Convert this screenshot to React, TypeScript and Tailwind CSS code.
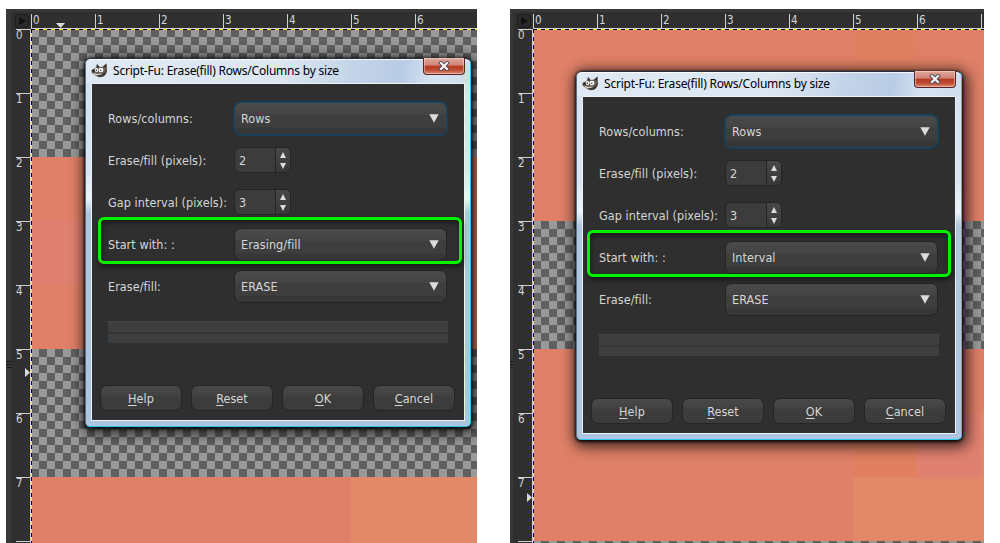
import clsx from 'clsx';

const UI_FONT = "font-['DejaVu_Sans_Condensed','DejaVu_Sans',sans-serif]";

type Band = { height: number; cells?: string[] };

const BASE = '#e08068';

function Wilber() {
  return (
    <svg width="17" height="16" viewBox="0 0 17 16">
      <path d="M4.5 5 L6 1 L8.5 4 L12 3.6 L15.5 0.5 L16 6 Q16.5 11 12.5 13.5 Q8 15.5 4.5 12.5 L1 10 Q-0.3 7.5 1.5 6.5 Z" fill="#6a6258" />
      <path d="M6 1 L8.5 4 L6 5 Z M15.5 .5 L15 5 L12 3.8 Z" fill="#3a3530" />
      <path d="M8 12 Q13 11.5 15.5 6 Q15.8 11 12.3 13.2 Q9 14.6 6 13.2 Z" fill="#3d3935" />
      <ellipse cx="5.6" cy="7" rx="1.8" ry="2.1" fill="#f4f4f0" />
      <ellipse cx="10" cy="7" rx="2.4" ry="2.3" fill="#fff" />
      <circle cx="5.4" cy="7.2" r="0.7" fill="#333" />
      <circle cx="9.8" cy="7.2" r="0.8" fill="#333" />
      <ellipse cx="2.3" cy="7.8" rx="1.5" ry="1.3" fill="#2a2a2a" />
      <path d="M3 10.5 Q6 12.5 10.5 10.8" stroke="#d8d4cc" strokeWidth="1.2" fill="none" />
    </svg>
  );
}

function CloseButton() {
  return (
    <div className="flex h-[17px] w-[42px] items-center justify-center rounded-b-[4px] border border-t-0 border-[#54242a] bg-[linear-gradient(#dfa89d_0%,#d28374_45%,#b93a22_50%,#bd4a30_75%,#dc8e72_100%)] shadow-[inset_0_0_0_1px_rgba(255,220,210,0.5)]">
      <svg width="12" height="10" viewBox="0 0 12 10">
        <path d="M3 2 L9 8 M9 2 L3 8" stroke="#4c4a58" strokeWidth="4" strokeLinecap="square" />
        <path d="M3 2 L9 8 M9 2 L3 8" stroke="#f4f4f4" strokeWidth="2.2" strokeLinecap="square" />
      </svg>
    </div>
  );
}

function Label({ children }: { children: string }) {
  return <div className="w-[126px] shrink-0 pt-[2px] whitespace-nowrap">{children}</div>;
}

function Combo({ value, focused = false }: { value: string; focused?: boolean }) {
  return (
    <div
      className={clsx(
        'flex h-[33px] w-[213px] items-center justify-between rounded-[7px] border bg-[linear-gradient(#4b4b4b_0%,#434343_38%,#3e3e3e_40%,#3e3e3e_78%,#373737_80%,#373737_100%)] pr-[7px] pl-[6px]',
        focused ? 'border-[#174463] shadow-[0_0_0_1px_#1b3c52]' : 'border-[#242424]'
      )}
    >
      <span className="pt-[3px]">{value}</span>
      <svg width="10" height="9" viewBox="0 0 10 9">
        <path d="M0.3 0.3 H9.7 L5 8.7 Z" fill="#dcdcdc" />
      </svg>
    </div>
  );
}

function Spin({ value }: { value: string }) {
  return (
    <div className="flex h-[26px] w-[57px] overflow-hidden rounded-[6px] border border-[#242424] bg-[#3c3c3c]">
      <div className="flex w-[40px] items-center pt-[2px] pl-[4px]">{value}</div>
      <div className="flex flex-1 flex-col items-center justify-center gap-[5px] border-l border-[#242424] bg-[linear-gradient(#484848,#383838)]">
        <svg width="6" height="6" viewBox="0 0 6 6">
          <path d="M3 0 L6 6 H0 Z" fill="#dcdcdc" />
        </svg>
        <svg width="6" height="6" viewBox="0 0 6 6">
          <path d="M0 0 H6 L3 6 Z" fill="#dcdcdc" />
        </svg>
      </div>
    </div>
  );
}

function DialogButton({ label }: { label: string }) {
  return (
    <div className="flex h-[26px] w-[82px] items-center justify-center rounded-[7px] border border-[#242424] bg-[linear-gradient(#494949_0%,#424242_38%,#3d3d3d_42%,#3b3b3b_100%)]">
      <span className="pt-[2px]">
        <span className="underline underline-offset-2">{label[0]}</span>
        {label.slice(1)}
      </span>
    </div>
  );
}

type DialogProps = { startWith: string; className: string; highlightClass: string };

function Dialog({ startWith, className, highlightClass }: DialogProps) {
  return (
    <div
      className={clsx(
        'absolute flex h-[369px] w-[386px] flex-col rounded-t-[6px] rounded-b-[5px] border border-t-[#26303a] border-r-[#27c8ee] border-b-[#27c8ee] border-l-[#5b7082] bg-[linear-gradient(#d4e0ee_0%,#d9e6f2_30%,#eef5fa_38%,#b0c6de_42%,#aec5e0_100%)] shadow-[0_1px_3px_1px_rgba(0,0,0,0.85),2px_3px_14px_4px_rgba(0,0,0,0.7)]',
        className
      )}
    >
      <div className="flex h-[24px] shrink-0 items-start justify-between rounded-t-[5px] border-t border-white/80 bg-[linear-gradient(100deg,#dfe9f3_0%,#dde7f1_50%,#c3d3e8_70%,#b9cce5_82%,#d6e3f1_90%,#cfdcec_100%)] pr-[5px] pl-[5px]">
        <div className="flex items-center gap-[5px] pt-[2px] font-['Noto_Sans','Open_Sans',sans-serif] text-[12px] leading-[17px] tracking-[-0.21px] whitespace-nowrap text-black">
          <Wilber />
          <span>Script-Fu: Erase(fill) Rows/Columns by size</span>
        </div>
        <div className="-mt-[2px]">
          <CloseButton />
        </div>
      </div>
      <div className={clsx('relative mx-[5px] mb-[5px] flex flex-1 flex-col border border-[#eaf2fa] bg-[#2f2f2f] pt-[13px] text-[12.5px] tracking-[0.06px] text-[#d6d6d6]', UI_FONT)}>
        <div className="flex flex-col pl-[16px]">
          <div className="flex h-[42px] items-center">
            <Label>Rows/columns:</Label>
            <Combo value="Rows" focused />
          </div>
          <div className="flex h-[42px] items-center">
            <Label>Erase/fill (pixels):</Label>
            <Spin value="2" />
          </div>
          <div className="flex h-[42px] items-center">
            <Label>Gap interval (pixels):</Label>
            <Spin value="3" />
          </div>
          <div className="flex h-[42px] items-center">
            <Label>Start with: :</Label>
            <Combo value={startWith} />
          </div>
          <div className="flex h-[42px] items-center">
            <Label>Erase/fill:</Label>
            <Combo value="ERASE" />
          </div>
          <div className="mt-[14px] -ml-px h-[23px] w-[342px] border border-[#27323a] border-t-[#3f4848] bg-[linear-gradient(#3e3e3e_0_10px,#353535_10px_12px,#3e3e3e_12px)]" />
        </div>
        <div className="mt-auto mb-[9px] flex gap-[9px] pl-[8px]">
          <DialogButton label="Help" />
          <DialogButton label="Reset" />
          <DialogButton label="OK" />
          <DialogButton label="Cancel" />
        </div>
        {/* highlight around the changed option */}
        <div
          className={clsx(
            'absolute h-[47px] rounded-[6px] border-[3px] border-[#00f400] shadow-[1px_3px_5px_rgba(0,0,0,0.5),inset_1px_3px_5px_rgba(0,0,0,0.45)]',
            highlightClass
          )}
        />
      </div>
    </div>
  );
}

function Corner() {
  return (
    <div className="flex w-[20px] shrink-0 items-center justify-center pl-[2px]">
      <div className="flex h-[14px] w-[14px] items-center justify-center rounded-[3px] border border-[#1d1d1d] bg-[#2a2a2a]">
        <svg width="7" height="8" viewBox="0 0 7 8">
          <path d="M0 0 L7 4 L0 8 Z" fill="#111" />
        </svg>
      </div>
    </div>
  );
}

function TopRuler({ marker }: { marker?: boolean }) {
  return (
    <div className="relative flex min-w-0 flex-1 items-end overflow-hidden border-b border-[#d0d0d0]">
      {Array.from({ length: 8 }).map((_, i) => (
        <div key={i} className="h-[14px] w-16 shrink-0 border-l border-[#d0d0d0] pl-px leading-[12px]">
          {i < 7 ? i : ''}
        </div>
      ))}
      {marker && (
        <svg className="absolute bottom-0 left-[25px]" width="9" height="5" viewBox="0 0 9 5">
          <path d="M0 0 H9 L4.5 5 Z" fill="#dadada" />
        </svg>
      )}
    </div>
  );
}

function SideRuler({ markerClass }: { markerClass: string }) {
  return (
    <div className="relative flex w-[20px] shrink-0 flex-col border-r border-[#d0d0d0] pl-[5px]">
      {Array.from({ length: 9 }).map((_, i) => (
        <div key={i} className="h-16 shrink-0 border-t border-[#d0d0d0] leading-[10px]">
          {i < 8 ? i : ''}
        </div>
      ))}
      <svg className={clsx('absolute right-0', markerClass)} width="5" height="9" viewBox="0 0 5 9">
        <path d="M0 0 L5 4.5 L0 9 Z" fill="#dadada" />
      </svg>
    </div>
  );
}

function Canvas({ bands }: { bands: Band[] }) {
  return (
    <div className="relative min-w-0 flex-1 overflow-hidden bg-[conic-gradient(#606060_25%,#999_0_50%,#606060_0_75%,#999_0)] bg-[length:16px_16px]">
      {bands.map((band, i) => (
        <div key={i} className="flex" style={{ height: band.height }}>
          {band.cells?.map((color, j) => (
            <div key={j} className="w-16 shrink-0" style={{ backgroundColor: color }} />
          ))}
        </div>
      ))}
      {/* layer boundary */}
      <div className="absolute inset-x-0 top-0 h-px bg-[repeating-linear-gradient(90deg,#000_0_4px,#ffee00_4px_8px)]" />
      <div className="absolute inset-y-0 left-0 w-px bg-[repeating-linear-gradient(#000_0_4px,#ffee00_4px_8px)]" />
    </div>
  );
}

type ImageWindowProps = {
  className: string;
  gutter: string;
  bands: Band[];
  markerClass: string;
  topMarker?: boolean;
  startWith: string;
  dialogClass: string;
  highlightClass: string;
};

function ImageWindow({
  className,
  gutter,
  bands,
  markerClass,
  topMarker,
  startWith,
  dialogClass,
  highlightClass,
}: ImageWindowProps) {
  return (
    <div className={clsx('relative flex h-[534px] overflow-hidden bg-[#2f2f2f]', className)}>
      <div className={clsx('flex shrink-0 items-center bg-[#383838] pt-[178px]', gutter)}>
        <div className="h-[9px] w-full bg-[repeating-linear-gradient(#181818_0_1px,#383838_1px_3px)]" />
      </div>
      <div className={clsx('flex min-w-0 flex-1 flex-col text-[11.5px] text-[#d6d6d6]', UI_FONT)}>
        <div className="h-[3px] shrink-0 bg-[#383838]" />
        <div className="flex h-[17px] shrink-0">
          <Corner />
          <TopRuler marker={topMarker} />
        </div>
        <div className="flex min-h-0 flex-1">
          <SideRuler markerClass={markerClass} />
          <Canvas bands={bands} />
        </div>
      </div>
      <Dialog startWith={startWith} className={dialogClass} highlightClass={highlightClass} />
    </div>
  );
}

const row = (...cells: string[]): Band => ({ height: 64, cells });

const leftBands: Band[] = [
  { height: 128 },
  row(BASE, '#e17b68', BASE, BASE, BASE, BASE, BASE),
  row('#e08070', '#e08070', BASE, BASE, BASE, BASE, BASE),
  row(BASE, BASE, BASE, BASE, BASE, BASE, BASE),
  { height: 128 },
  row(BASE, BASE, BASE, BASE, BASE, '#e08868', '#e08868'),
  row(BASE, BASE, BASE, BASE, BASE, '#e08868', '#e08868'),
];

const rightBands: Band[] = [
  row(BASE, BASE, BASE, BASE, BASE, '#e08062', '#e08068', BASE),
  row(BASE, '#e17b68', BASE, BASE, BASE, BASE, BASE, BASE),
  row(BASE, BASE, BASE, BASE, BASE, BASE, BASE, BASE),
  { height: 128 },
  row(BASE, BASE, BASE, BASE, BASE, BASE, BASE, BASE),
  row(BASE, BASE, BASE, BASE, BASE, '#e08060', '#e08070', '#e08868'),
  row(BASE, BASE, BASE, BASE, BASE, '#e08868', '#e08868', '#e08868'),
];

export default function App() {
  return (
    <div className="flex h-[543px] w-[1000px] gap-[33px] overflow-hidden bg-white pt-[9px] pl-[6px]">
      <ImageWindow
        className="w-[471px]"
        gutter="w-[5px]"
        bands={leftBands}
        markerClass="top-[339px]"
        topMarker
        startWith="Erasing/fill"
        dialogClass="top-[49px] left-[79px]"
        highlightClass="top-[133px] left-[6px] w-[364px]"
      />
      <ImageWindow
        className="w-[474px]"
        gutter="w-[3px]"
        bands={rightBands}
        markerClass="top-[464px]"
        startWith="Interval"
        dialogClass="top-[62px] left-[66px]"
        highlightClass="top-[133px] left-[4px] w-[364px]"
      />
    </div>
  );
}
